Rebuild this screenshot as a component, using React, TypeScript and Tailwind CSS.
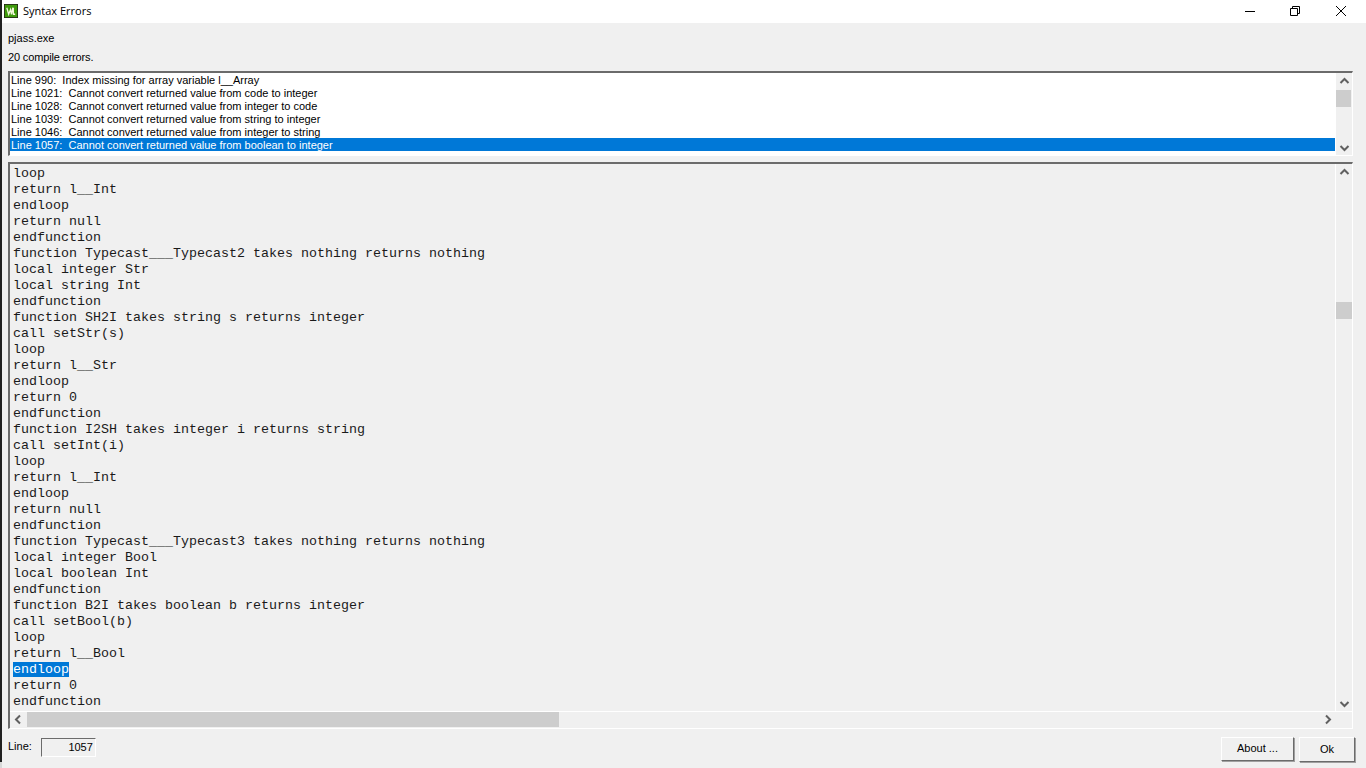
import React from "react";

const errors = [
  "Line 990:  Index missing for array variable l__Array",
  "Line 1021:  Cannot convert returned value from code to integer",
  "Line 1028:  Cannot convert returned value from integer to code",
  "Line 1039:  Cannot convert returned value from string to integer",
  "Line 1046:  Cannot convert returned value from integer to string",
  "Line 1057:  Cannot convert returned value from boolean to integer",
  "Line 1064:  Cannot convert returned value from integer to boolean",
];

const code = [
  "loop",
  "return l__Int",
  "endloop",
  "return null",
  "endfunction",
  "function Typecast___Typecast2 takes nothing returns nothing",
  "local integer Str",
  "local string Int",
  "endfunction",
  "function SH2I takes string s returns integer",
  "call setStr(s)",
  "loop",
  "return l__Str",
  "endloop",
  "return 0",
  "endfunction",
  "function I2SH takes integer i returns string",
  "call setInt(i)",
  "loop",
  "return l__Int",
  "endloop",
  "return null",
  "endfunction",
  "function Typecast___Typecast3 takes nothing returns nothing",
  "local integer Bool",
  "local boolean Int",
  "endfunction",
  "function B2I takes boolean b returns integer",
  "call setBool(b)",
  "loop",
  "return l__Bool",
  "endloop",
  "return 0",
  "endfunction",
];

const Chevron = ({ dir }: { dir: "up" | "down" | "left" | "right" }) => {
  const d = {
    up: "M1.5 7 L5.5 3 L9.5 7",
    down: "M1.5 4 L5.5 8 L9.5 4",
    left: "M7 1.5 L3 5.5 L7 9.5",
    right: "M4 1.5 L8 5.5 L4 9.5",
  }[dir];
  return (
    <svg width="11" height="11" viewBox="0 0 11 11" fill="none" stroke="#606060" strokeWidth="2">
      <path d={d} />
    </svg>
  );
};

const App = () => {
  return (
    <div className="w-[1366px] h-[768px] overflow-hidden flex bg-[#f0f0f0] font-['Liberation_Sans',sans-serif] text-[11px] text-black">
      <div className="w-[2px] shrink-0 bg-[#d8d8d8]">
        <div className="h-[762px] bg-[#202020]" />
      </div>
      <div className="flex-1 flex flex-col min-w-0">
        <div className="h-[23px] bg-white flex items-center shrink-0 pb-px">
          <svg className="ml-[2px]" width="14" height="14" viewBox="0 0 15 15">
            <rect x="0.5" y="0.5" width="14" height="14" fill="#3f9a0c" stroke="#22300f" />
            <path d="M3 4 L5 11 L7 6 L8 11 L9.5 4 M9.5 11 L12 11 M10 4 L10 11" fill="none" stroke="#f3f7dc" strokeWidth="1.4" />
          </svg>
          <span className="ml-[5px] font-['Open_Sans',sans-serif] text-[11px]">Syntax Errors</span>
          <div className="ml-auto flex items-center h-full pr-[2px]">
            <div className="w-[46px] flex justify-center mr-[-1px]">
              <svg width="10" height="10" viewBox="0 0 10 10" stroke="#000" fill="none">
                <path d="M0 5.5 H10" />
              </svg>
            </div>
            <div className="w-[46px] flex justify-center">
              <svg width="10" height="10" viewBox="0 0 10 10" stroke="#000" fill="none">
                <path d="M0.5 2.5 H7.5 V9.5 H0.5 Z M2.5 2.5 V0.5 H9.5 V7.5 H7.5" />
              </svg>
            </div>
            <div className="w-[46px] flex justify-center">
              <svg width="10" height="10" viewBox="0 0 10 10" stroke="#000" fill="none">
                <path d="M0 0 L10 10 M10 0 L0 10" />
              </svg>
            </div>
          </div>
        </div>

        <div className="pl-[6px] pr-[13px] flex-1 flex flex-col min-h-0">
          <div className="h-[13px] mt-[9px] leading-[13px]">pjass.exe</div>
          <div className="h-[13px] mt-[6px] leading-[13px] tracking-[-0.15px]">20 compile errors.</div>

          <div className="mt-[7px] h-[85px] flex border-t-2 border-l-2 border-[#6b6b6b] border-r border-b border-r-white border-b-white overflow-hidden">
            <div className="flex-1 bg-white overflow-hidden pr-px">
              {errors.map((line, i) => (
                <div
                  key={line}
                  className={`h-[13px] pl-px whitespace-pre ${i === 6 ? "leading-[18px]" : "leading-[15px]"} ${i === 5 ? "bg-[#0078d7] text-white" : ""}`}
                >
                  {line}
                </div>
              ))}
            </div>
            <div className="w-[16px] flex flex-col items-center">
              <div className="h-[16px] flex items-center justify-center"><Chevron dir="up" /></div>
              <div className="flex-1 w-full">
                <div className="mt-[1px] h-[17px] w-[15px] bg-[#cdcdcd]" />
              </div>
              <div className="h-[16px] flex items-center justify-center"><Chevron dir="down" /></div>
            </div>
          </div>

          <div className="mt-[6px] h-[567px] flex flex-col border-t-2 border-l-2 border-[#6b6b6b] border-r border-b border-r-white border-b-white">
            <div className="flex-1 flex min-h-0">
              <div className="flex-1 overflow-hidden pl-[3px] pt-[2px] font-['Liberation_Mono',monospace] text-[13.33px] text-[#1a1a1a]">
                {code.map((line, i) => (
                  <div key={i} className="h-[16px] leading-[16px] whitespace-pre">
                    {i === 31 ? <span className="bg-[#0078d7] text-white">{line}</span> : line}
                  </div>
                ))}
              </div>
              <div className="w-[17px] border-l border-white flex flex-col items-center">
                <div className="h-[16px] flex items-center justify-center"><Chevron dir="up" /></div>
                <div className="flex-1 w-full">
                  <div className="mt-[122px] h-[17px] w-full bg-[#cdcdcd]" />
                </div>
                <div className="h-[16px] flex items-center justify-center"><Chevron dir="down" /></div>
              </div>
            </div>
            <div className="h-[17px] flex items-center border-t border-white shrink-0 pr-[17px] pb-px">
              <div className="w-[17px] flex justify-center"><Chevron dir="left" /></div>
              <div className="flex-1 h-full">
                <div className="h-full w-[532px] bg-[#cdcdcd]" />
              </div>
              <div className="w-[16px] flex justify-center"><Chevron dir="right" /></div>
            </div>
          </div>

          <div className="mt-[8px] flex items-start">
            <span className="mt-[3px] leading-[13px]">Line:</span>
            <div className="ml-[9px] mt-px w-[55px] h-[19px] border-t border-l border-[#6b6b6b] border-r border-b border-r-white border-b-white flex items-center justify-end pr-[2px]">
              1057
            </div>
            <button className="ml-auto w-[73px] h-[24px] pb-px bg-[#f0f0f0] border border-white border-r-[#6b6b6b] border-b-[#6b6b6b] shadow-[1px_1px_0_#a0a0a0]">
              About ...
            </button>
            <button className="ml-[5px] mr-[-2px] w-[56px] h-[25px] pb-px bg-[#f0f0f0] border border-white border-r-[#6b6b6b] border-b-[#6b6b6b] shadow-[1px_1px_0_#a0a0a0]">
              Ok
            </button>
          </div>
        </div>
      </div>
    </div>
  );
};

export default App;
